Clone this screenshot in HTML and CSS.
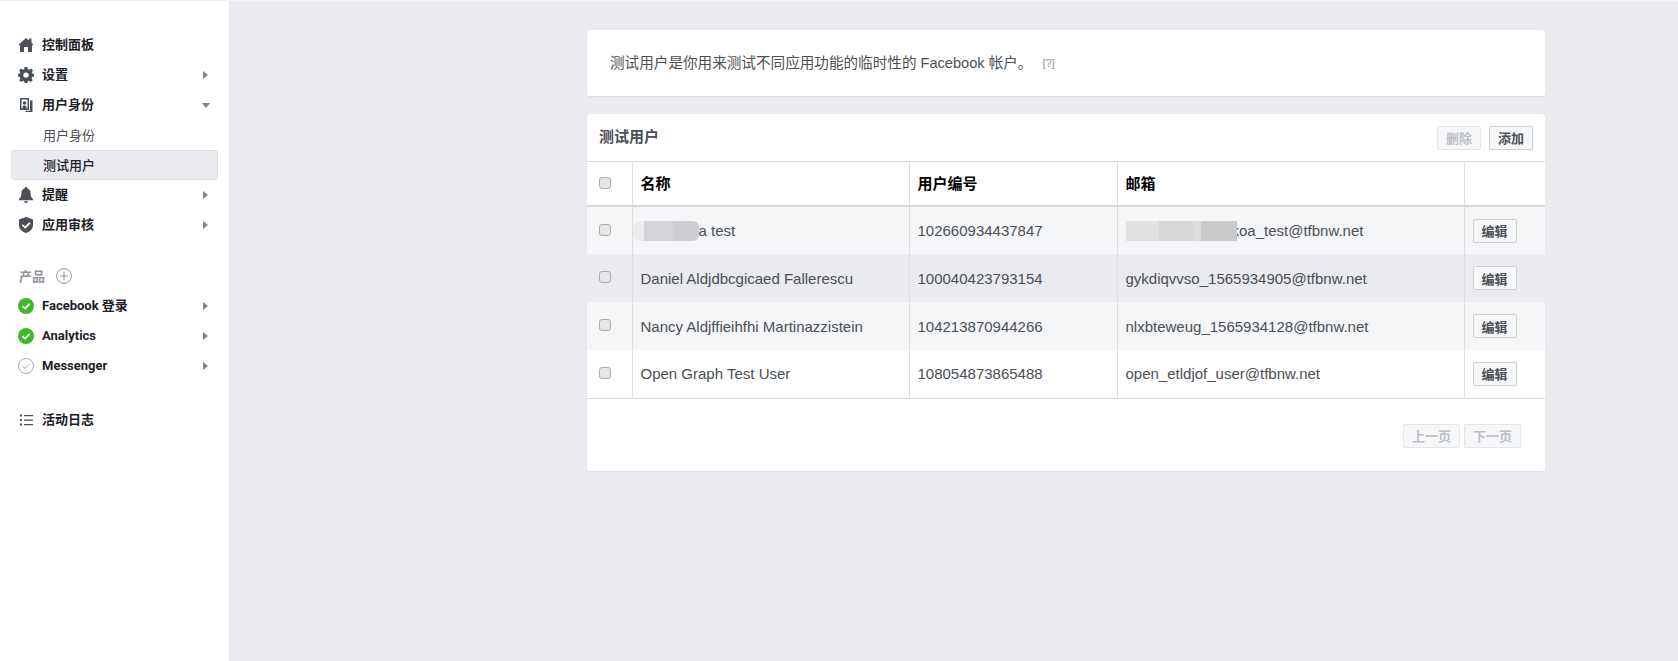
FILE: index.html
```html
<!DOCTYPE html>
<html lang="zh-CN">

<head>
  <meta charset="utf-8">
  <title>测试用户</title>
  <link rel="stylesheet" href="styles.css">
</head>

<body>
  <div class="page">
    <nav class="sidebar">
      <ul class="menu">
        <li class="menu-item">
          <svg class="icon" viewBox="0 0 16 16"><path d="M8 1 L11 3.6 V1.5 H13.5 V5.8 L15 7.2 V8.2 H14 V15 H10 V10 H6 V15 H2 V8.2 H1 V7.2 Z" /></svg>
          <span>控制面板</span>
        </li>
        <li class="menu-item">
          <svg class="icon" viewBox="0 0 16 16"><path fill-rule="evenodd" d="M6.6 0 H9.4 L9.9 2.2 L11.2 2.8 L13.2 1.6 L15 3.5 L13.8 5.4 L14.3 6.6 L16 7 V9.6 L14 10 L13.5 11.3 L14.7 13.2 L12.8 15 L11 13.8 L9.8 14.3 L9.4 16 H6.6 L6.2 14.3 L5 13.8 L3.2 15 L1.2 13.2 L2.4 11.3 L1.9 10 L0 9.6 V7 L1.9 6.6 L2.4 5.4 L1.2 3.5 L3 1.6 L5 2.8 L6.2 2.2 Z M8 5.4 A2.7 2.7 0 1 0 8 10.8 A2.7 2.7 0 1 0 8 5.4 Z" /></svg>
          <span>设置</span>
          <i class="arrow"></i>
        </li>
        <li class="menu-item">
          <svg class="icon" viewBox="0 0 16 16"><path fill-rule="evenodd" d="M2 1 H11 V13 H2 Z M3.5 2.5 V11.5 H4.6 V10 C4.6 9 5.4 8.6 6.5 8.6 C7.6 8.6 8.4 9 8.4 10 V11.5 H9.5 V2.5 Z" /><circle cx="6.5" cy="6" r="1.8" /><path d="M12 3.5 H14.5 V15 H7.5 V13.8 H12 Z" /></svg>
          <span>用户身份</span>
          <i class="arrow arrow-down"></i>
        </li>
        <li class="menu-sub">用户身份</li>
        <li class="menu-sub menu-sub-active">测试用户</li>
        <li class="menu-item">
          <svg class="icon" viewBox="0 0 16 16"><path d="M8 0 C9 0 9.4 .7 9.4 1.5 C11.8 2.2 12.6 4 12.6 6.5 C12.6 9.5 13.4 10.6 15 12 V13.2 H1 V12 C2.6 10.6 3.4 9.5 3.4 6.5 C3.4 4 4.2 2.2 6.6 1.5 C6.6 .7 7 0 8 0 Z M6 14.2 H10 C10 15.3 9 16 8 16 C7 16 6 15.3 6 14.2 Z" /></svg>
          <span>提醒</span>
          <i class="arrow"></i>
        </li>
        <li class="menu-item">
          <svg class="icon" viewBox="0 0 16 16"><path fill-rule="evenodd" d="M8 0 L15 2.4 V8 C15 12 12 14.6 8 16 C4 14.6 1 12 1 8 V2.4 Z M11.3 5.2 L7.2 9.3 L5 7.2 L3.8 8.4 L7.2 11.7 L12.5 6.4 Z" /></svg>
          <span>应用审核</span>
          <i class="arrow"></i>
        </li>
      </ul>

      <div class="products-title">
        <span>产品</span>
        <svg class="add-product" viewBox="0 0 16 16"><circle cx="8" cy="8" r="7.4" /><path d="M8 4 V12 M4 8 H12" /></svg>
      </div>
      <ul class="menu">
        <li class="menu-item menu-product">
          <svg class="icon status" viewBox="0 0 16 16"><circle cx="8" cy="8" r="8" fill="#42b72a" /><path d="M4.4 8.2 L7 10.6 L11.6 5.8" fill="none" stroke="#fff" stroke-width="1.8" /></svg>
          <span>Facebook 登录</span>
          <i class="arrow"></i>
        </li>
        <li class="menu-item menu-product">
          <svg class="icon status" viewBox="0 0 16 16"><circle cx="8" cy="8" r="8" fill="#42b72a" /><path d="M4.4 8.2 L7 10.6 L11.6 5.8" fill="none" stroke="#fff" stroke-width="1.8" /></svg>
          <span>Analytics</span>
          <i class="arrow"></i>
        </li>
        <li class="menu-item menu-product">
          <svg class="icon status" viewBox="0 0 16 16"><circle cx="8" cy="8" r="7.5" fill="#fff" stroke="#a8abb1" /><path d="M4.8 8.2 L7 10.4 L11.4 5.8" fill="none" stroke="#a8abb1" /></svg>
          <span>Messenger</span>
          <i class="arrow"></i>
        </li>
      </ul>

      <ul class="menu menu-log">
        <li class="menu-item">
          <svg class="icon" viewBox="0 0 16 16"><path d="M2 2.5 H4 V4.5 H2 Z M2 7 H4 V9 H2 Z M2 11.5 H4 V13.5 H2 Z" /><path d="M6 3 H15 V4.2 H6 Z M6 7.5 H15 V8.7 H6 Z M6 12 H15 V13.2 H6 Z" /></svg>
          <span>活动日志</span>
        </li>
      </ul>
    </nav>

    <main class="content">
      <section class="card intro">
        <span>测试用户是你用来测试不同应用功能的临时性的 Facebook 帐户。</span>
        <a class="help">[?]</a>
      </section>

      <section class="card users">
        <header class="users-head">
          <h2>测试用户</h2>
          <div class="actions">
            <button class="btn" disabled>删除</button>
            <button class="btn">添加</button>
          </div>
        </header>

        <table class="users-table">
          <colgroup>
            <col class="col-check">
            <col class="col-name">
            <col class="col-id">
            <col class="col-mail">
            <col class="col-edit">
          </colgroup>
          <thead>
            <tr>
              <th><input class="check" type="checkbox"></th>
              <th>名称</th>
              <th>用户编号</th>
              <th>邮箱</th>
              <th></th>
            </tr>
          </thead>
          <tbody>
            <tr class="row-alt">
              <td><input class="check" type="checkbox"></td>
              <td><span class="blur blur-name"></span>a test</td>
              <td>102660934437847</td>
              <td><span class="blur blur-mail"></span>koa_test@tfbnw.net</td>
              <td><button class="btn">编辑</button></td>
            </tr>
            <tr class="row-hover">
              <td><input class="check" type="checkbox"></td>
              <td>Daniel Aldjdbcgicaed Fallerescu</td>
              <td>100040423793154</td>
              <td>gykdiqvvso_1565934905@tfbnw.net</td>
              <td><button class="btn">编辑</button></td>
            </tr>
            <tr class="row-alt">
              <td><input class="check" type="checkbox"></td>
              <td>Nancy Aldjffieihfhi Martinazzistein</td>
              <td>104213870944266</td>
              <td>nlxbteweug_1565934128@tfbnw.net</td>
              <td><button class="btn">编辑</button></td>
            </tr>
            <tr>
              <td><input class="check" type="checkbox"></td>
              <td>Open Graph Test User</td>
              <td>108054873865488</td>
              <td>open_etldjof_user@tfbnw.net</td>
              <td><button class="btn">编辑</button></td>
            </tr>
          </tbody>
        </table>

        <footer class="pager">
          <button class="btn" disabled>上一页</button>
          <button class="btn" disabled>下一页</button>
        </footer>
      </section>
    </main>
  </div>
</body>

</html>
```

FILE: styles.css
```css
html,
body {
  margin: 0;
  height: 100%;
}

body {
  background: #e9ebee;
  color: #4b4f56;
  font-family: "Liberation Sans", "Noto Sans CJK SC", sans-serif;
  font-size: 15px;
}

ul {
  list-style: none;
  margin: 0;
  padding: 0;
}

.page {
  display: flex;
  min-height: 661px;
  box-sizing: border-box;
  border-top: 1px solid #f1f2f4;
}

/* sidebar */
.sidebar {
  width: 229px;
  flex: none;
  box-sizing: border-box;
  background: white;
  padding: 29px 11px 0;
}

.menu-item {
  display: flex;
  align-items: center;
  height: 30px;
  padding-left: 7px;
  color: #1d2129;
  font-family: Roboto, "Noto Sans CJK SC", sans-serif;
  font-size: 13px;
  font-weight: bold;
  line-height: 16px;
}

.menu-item span {
  flex: 1;
  margin-left: 8px;
}

.icon {
  width: 16px;
  height: 16px;
  flex: none;
  fill: #4b4f56;
}

.arrow {
  margin-right: 10px;
  border-left: 5px solid #7f8388;
  border-top: 4px solid transparent;
  border-bottom: 4px solid transparent;
}

.arrow-down {
  margin-right: 8px;
  border-top: 5px solid #7f8388;
  border-left: 4px solid transparent;
  border-right: 4px solid transparent;
  border-bottom: none;
}

.menu-sub {
  height: 30px;
  line-height: 31px;
  padding-left: 32px;
  color: #4b4f56;
  font-size: 13px;
}

.menu-sub-active {
  box-sizing: border-box;
  line-height: 29px;
  background: #e9ebee;
  border: 1px solid #dddfe2;
  border-radius: 3px;
  padding-left: 31px;
  color: #1d2129;
  font-weight: 500;
}

.products-title {
  display: flex;
  align-items: center;
  gap: 11px;
  height: 20px;
  margin-top: 26px;
  margin-bottom: 5px;
  padding-left: 8px;
  color: #90949c;
  font-size: 13px;
  font-weight: bold;
}

.products-title span {
  padding-bottom: 2px;
}

.add-product {
  width: 16px;
  height: 16px;
  fill: none;
  stroke: #90949c;
}

.menu-log {
  margin-top: 24px;
}

/* right side */
.content {
  width: 958px;
  padding: 29px 0 0 358px;
}

.card {
  box-sizing: border-box;
  background: white;
  border-radius: 3px;
  border-bottom: 1px solid #dddfe2;
  box-shadow: 0 0 1px #d5d7da;
}

.intro {
  height: 67px;
  line-height: 66px;
  padding-left: 23px;
  margin-bottom: 17px;
  font-size: 14.6px;
}

.help {
  margin-left: 6px;
  color: #90949c;
  font-size: 11px;
  vertical-align: 1px;
}

.users {
  height: 358px;
}

.users-head {
  display: flex;
  align-items: center;
  justify-content: space-between;
  height: 47px;
  box-sizing: border-box;
  padding: 0 12px 0 12px;
}

.users-head h2 {
  margin: 0 0 5px;
  font-size: 15px;
  font-weight: bold;
}

.actions {
  display: flex;
  gap: 8px;
}

.btn {
  height: 24px;
  padding: 0 8px;
  background: #f6f7f9;
  border: 1px solid #ced0d4;
  border-radius: 2px;
  color: #4b4f56;
  font-family: "Liberation Sans", "Noto Sans CJK SC", sans-serif;
  font-size: 13px;
  font-weight: bold;
}

.btn:disabled {
  border-color: #e4e6e9;
  color: #bcc0c4;
}

.users-table {
  width: 958px;
  table-layout: fixed;
  border-collapse: collapse;
  border-top: 1px solid #dddfe2;
  border-bottom: 1px solid #dddfe2;
}

.col-check {
  width: 45px;
}

.col-name {
  width: 277px;
}

.col-id {
  width: 208px;
}

.col-mail {
  width: 347px;
}

.users-table th {
  height: 41px;
  padding: 0 0 2px 8px;
  border-left: 1px solid #dddfe2;
  border-bottom: 2px solid #d5d7da;
  color: black;
  font-size: 15px;
  text-align: left;
}

.users-table td {
  height: 48px;
  box-sizing: border-box;
  padding: 0 0 0 8px;
  border-left: 1px solid #dddfe2;
  font-size: 15px;
}

.users-table th:first-child,
.users-table td:first-child {
  padding-left: 12px;
  border-left: none;
}

.users-table td:first-child {
  padding-bottom: 2px;
}

.row-alt {
  background: #f5f6f7;
}

.row-hover {
  background: #e9ebee;
}

.check {
  display: block;
  appearance: none;
  box-sizing: border-box;
  width: 12px;
  height: 12px;
  margin: 0;
  background: #e6e6e6;
  border: 1px solid #adadad;
  border-radius: 3px;
}

.blur {
  display: inline-block;
  height: 20px;
  vertical-align: -5px;
  background: linear-gradient(90deg, #eaebec 0 16%, #d3d4d7 16% 60%, #cdced1 60% 100%);
}

.blur-name {
  width: 66px;
  margin-left: -8px;
  border-radius: 8px 6px 6px 8px;
}

/* covers the first letter of the mail part, like the blur in the original shot */
.blur-mail {
  position: relative;
  width: 111px;
  margin-right: -5px;
  background: linear-gradient(90deg, #e1e2e4 0 30%, #d6d7d9 30% 60%, #dcdddf 60% 68%, #c9cacc 68% 100%);
}

.pager {
  display: flex;
  justify-content: flex-end;
  gap: 4px;
  padding: 25px 24px 0 0;
}
```
